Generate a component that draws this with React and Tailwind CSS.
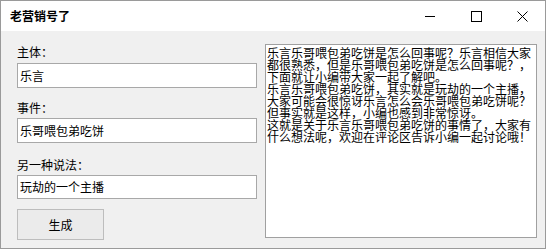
export default function App() {
  const font = { fontFamily: '"Noto Sans CJK SC", "Noto Sans", sans-serif' };
  const lines = [
    "乐言乐哥喂包弟吃饼是怎么回事呢？乐言相信大家",
    "都很熟悉，但是乐哥喂包弟吃饼是怎么回事呢？，",
    "下面就让小编带大家一起了解吧。",
    "乐言乐哥喂包弟吃饼，其实就是玩劫的一个主播，",
    "大家可能会很惊讶乐言怎么会乐哥喂包弟吃饼呢？",
    "但事实就是这样，小编也感到非常惊讶。",
    "这就是关于乐言乐哥喂包弟吃饼的事情了，大家有",
    "什么想法呢，欢迎在评论区告诉小编一起讨论哦！",
  ];
  return (
    <div className="w-[546px] h-[249px] border border-[#9a9a9a] flex flex-col bg-[#f0f0f0] text-black" style={font}>
      <div className="h-[30px] bg-white flex items-center justify-between shrink-0">
        <div className="pl-[9px] text-[12px] font-bold leading-none">老营销号了</div>
        <div className="flex items-center h-full">
          <div className="w-[46px] h-full flex items-center justify-center">
            <svg width="10" height="10" viewBox="0 0 10 10"><path d="M0 5.5h10" stroke="#000" strokeWidth="1" /></svg>
          </div>
          <div className="w-[46px] h-full flex items-center justify-center">
            <svg width="11" height="11" viewBox="0 0 11 11"><rect x="0.5" y="0.5" width="10" height="10" fill="none" stroke="#000" strokeWidth="1" /></svg>
          </div>
          <div className="w-[46px] h-full flex items-center justify-center">
            <svg width="11" height="11" viewBox="0 0 11 11"><path d="M0.5 0.5L10.5 10.5M10.5 0.5L0.5 10.5" stroke="#000" strokeWidth="1" /></svg>
          </div>
        </div>
      </div>
      <div className="flex-1 flex pl-[16px] pr-[7px]">
        <div className="w-[240px] flex flex-col pt-[13px]">
          <div className="text-[12px] leading-[16px] h-[16px]">主体：</div>
          <div className="mt-[3px] h-[25px] bg-white border border-[#a8a8a8] flex items-center pl-[2px] text-[12px]">乐言</div>
          <div className="mt-[12px] text-[12px] leading-[16px] h-[16px]">事件：</div>
          <div className="mt-[2px] h-[25px] bg-white border border-[#a8a8a8] flex items-center pl-[2px] text-[12px]">乐哥喂包弟吃饼</div>
          <div className="mt-[14px] text-[12px] leading-[16px] h-[16px]">另一种说法：</div>
          <div className="mt-[2px] h-[24px] bg-white border border-[#a8a8a8] flex items-center pl-[2px] text-[12px]">玩劫的一个主播</div>
          <div className="mt-[10px] w-[87px] h-[31px] bg-[#ebebeb] border border-[#bdbdbd] flex items-center justify-center text-[12px]">生成</div>
        </div>
        <div className="ml-[8px] mt-[13px] w-[272px] h-[194px] bg-white border border-[#a0a0a0] pl-[1px] pt-[2px] overflow-hidden">
          {lines.map((l, i) => (
            <div key={i} className="text-[12px] leading-[12px] whitespace-nowrap">{l}</div>
          ))}
        </div>
      </div>
    </div>
  );
}
